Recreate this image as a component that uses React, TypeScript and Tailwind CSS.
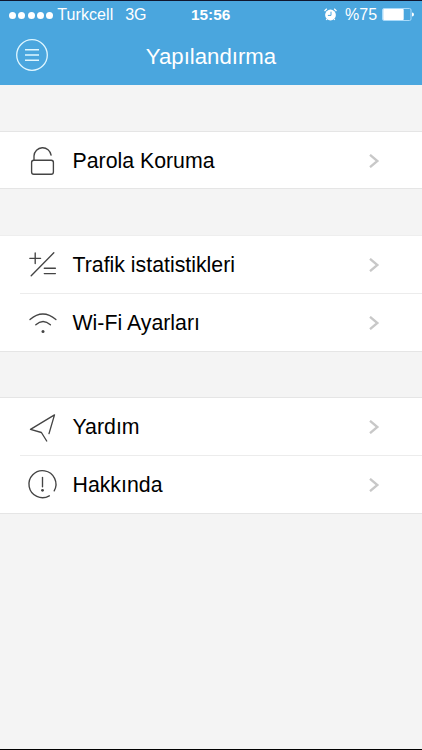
import type { ReactNode } from "react";

const Lock = () => (
  <>
    <rect x="11.6" y="21.2" width="21.8" height="14" rx="2.2" />
    <path d="M14 21.2V16.9a8.6 8.6 0 0 1 17.1-.8" />
  </>
);

const Stats = () => (
  <>
    <path d="M9.8 15.3H20.6M15.2 10V20.6M33.8 9.8L11.2 32.8M24.3 25.2H35.4M24.3 30.6H35.4" />
  </>
);

const Wifi = () => (
  <>
    <path d="M10 18.5Q22.8 7.5 35.9 18.5M15.8 23.8Q23 17.2 30.4 23.8" />
    <circle cx="23" cy="30.6" r="1.5" fill="#444" stroke="none" />
  </>
);

const Plane = () => <path d="M26.7 36L21.4 27.5 10.5 24.4 34.5 9.9 29 28.6" />;

const Alert = () => (
  <>
    <path d="M29.3 32.8A13.5 13.5 0 1 1 34.2 27.8" />
    <path d="M22.5 14.5v9.2" />
    <circle cx="22.5" cy="27.3" r="1.4" fill="#444" stroke="none" />
  </>
);

function Row({ label, children }: { label: string; children: ReactNode }) {
  return (
    <button className="flex h-[57px] w-full items-center pl-5 pr-[42px] text-left">
      <svg className="h-[43px] w-[45px] shrink-0" viewBox="0 0 45 43" fill="none" stroke="#444" strokeWidth="1.35" strokeLinecap="round" strokeLinejoin="round">
        {children}
      </svg>
      <span className="ml-[7.5px] grow whitespace-nowrap text-[21.3px] leading-6 text-black">{label}</span>
      <svg className="h-[14px] w-[11px]" viewBox="0 0 11 14" fill="none" stroke="#c8c8c8" strokeWidth="2.3">
        <path d="M1 .8L8.4 7 1 13.2" />
      </svg>
    </button>
  );
}

const Divider = () => <div className="ml-5 h-px bg-[#ececec]" />;

export default function App() {
  return (
    <div className="flex h-[750px] w-[422px] flex-col overflow-hidden border-b border-black bg-[#f4f4f4] font-['Liberation_Sans',Arial,sans-serif]">
      <header className="flex h-[85px] shrink-0 flex-col border-t border-[#10162f] bg-[#4aa6de] text-white">
        <div className="grid h-7 grid-cols-[191px_1fr_98px] items-center text-[16px] leading-7">
          <div className="flex items-center pl-[9px]">
            <div className="flex gap-[2.3px]">
              {[0, 1, 2, 3, 4].map((i) => (
                <span key={i} className="size-[7px] rounded-full bg-white" />
              ))}
            </div>
            <span className="ml-[4px] w-[68px] tracking-[0.1px]">Turkcell</span>
            <span className="text-[16px]">3G</span>
          </div>
          <span className="text-[15.4px] font-bold">15:56</span>
          <div className="flex items-center">
            <svg className="-mt-px h-[13px] w-[13px] shrink-0" viewBox="0 0 13 13" fill="white">
              <circle cx="6.5" cy="7" r="5.4" />
              <path d="M.5 3L2.8 .8M12.5 3L10.2 .8M3 11l-.8 1M10 11l.8 1" stroke="white" strokeWidth="1.2" />
              <path d="M7 3.7v3.7H3.9" fill="none" stroke="#4aa6de" strokeWidth="1" />
            </svg>
            <span className="ml-2 w-[37px]">%75</span>
            <svg className="-mt-px h-[13px] w-[33px] shrink-0" viewBox="0 0 33 13" fill="none">
              <rect x=".5" y=".5" width="28.5" height="12" rx="1.5" stroke="#a8dafa" />
              <rect x="1.2" y="1" width="20.5" height="11" rx=".7" fill="white" />
              <path d="M30 4.5q2 0 2 2t-2 2z" fill="white" />
            </svg>
          </div>
        </div>
        <div className="grid h-[56px] grid-cols-[1fr_auto_1fr] items-center">
          <svg className="mb-[4px] ml-4 size-8" viewBox="0 0 32 32" fill="none" stroke="#e0f7ff" strokeWidth="1.3">
            <circle cx="16" cy="16" r="15.3" />
            <path d="M9 10.7h14M9 16h14M9 21.3h14" strokeWidth="1.4" />
          </svg>
          <h1 className="text-[22.2px] leading-7">Yapılandırma</h1>
          <span />
        </div>
      </header>
      <main className="flex grow flex-col pt-[46px]">
        <section className="h-[58px] border-y border-[#e5e5e5] bg-white">
          <Row label="Parola Koruma"><Lock /></Row>
        </section>
        <section className="mt-[46px] border-y border-t-[#eeeeee] border-b-[#e5e5e5] bg-white">
          <Row label="Trafik istatistikleri"><Stats /></Row>
          <Divider />
          <Row label="Wi-Fi Ayarları"><Wifi /></Row>
        </section>
        <section className="mt-[45px] border-y border-[#e5e5e5] bg-white">
          <Row label="Yardım"><Plane /></Row>
          <Divider />
          <Row label="Hakkında"><Alert /></Row>
        </section>
      </main>
    </div>
  );
}
